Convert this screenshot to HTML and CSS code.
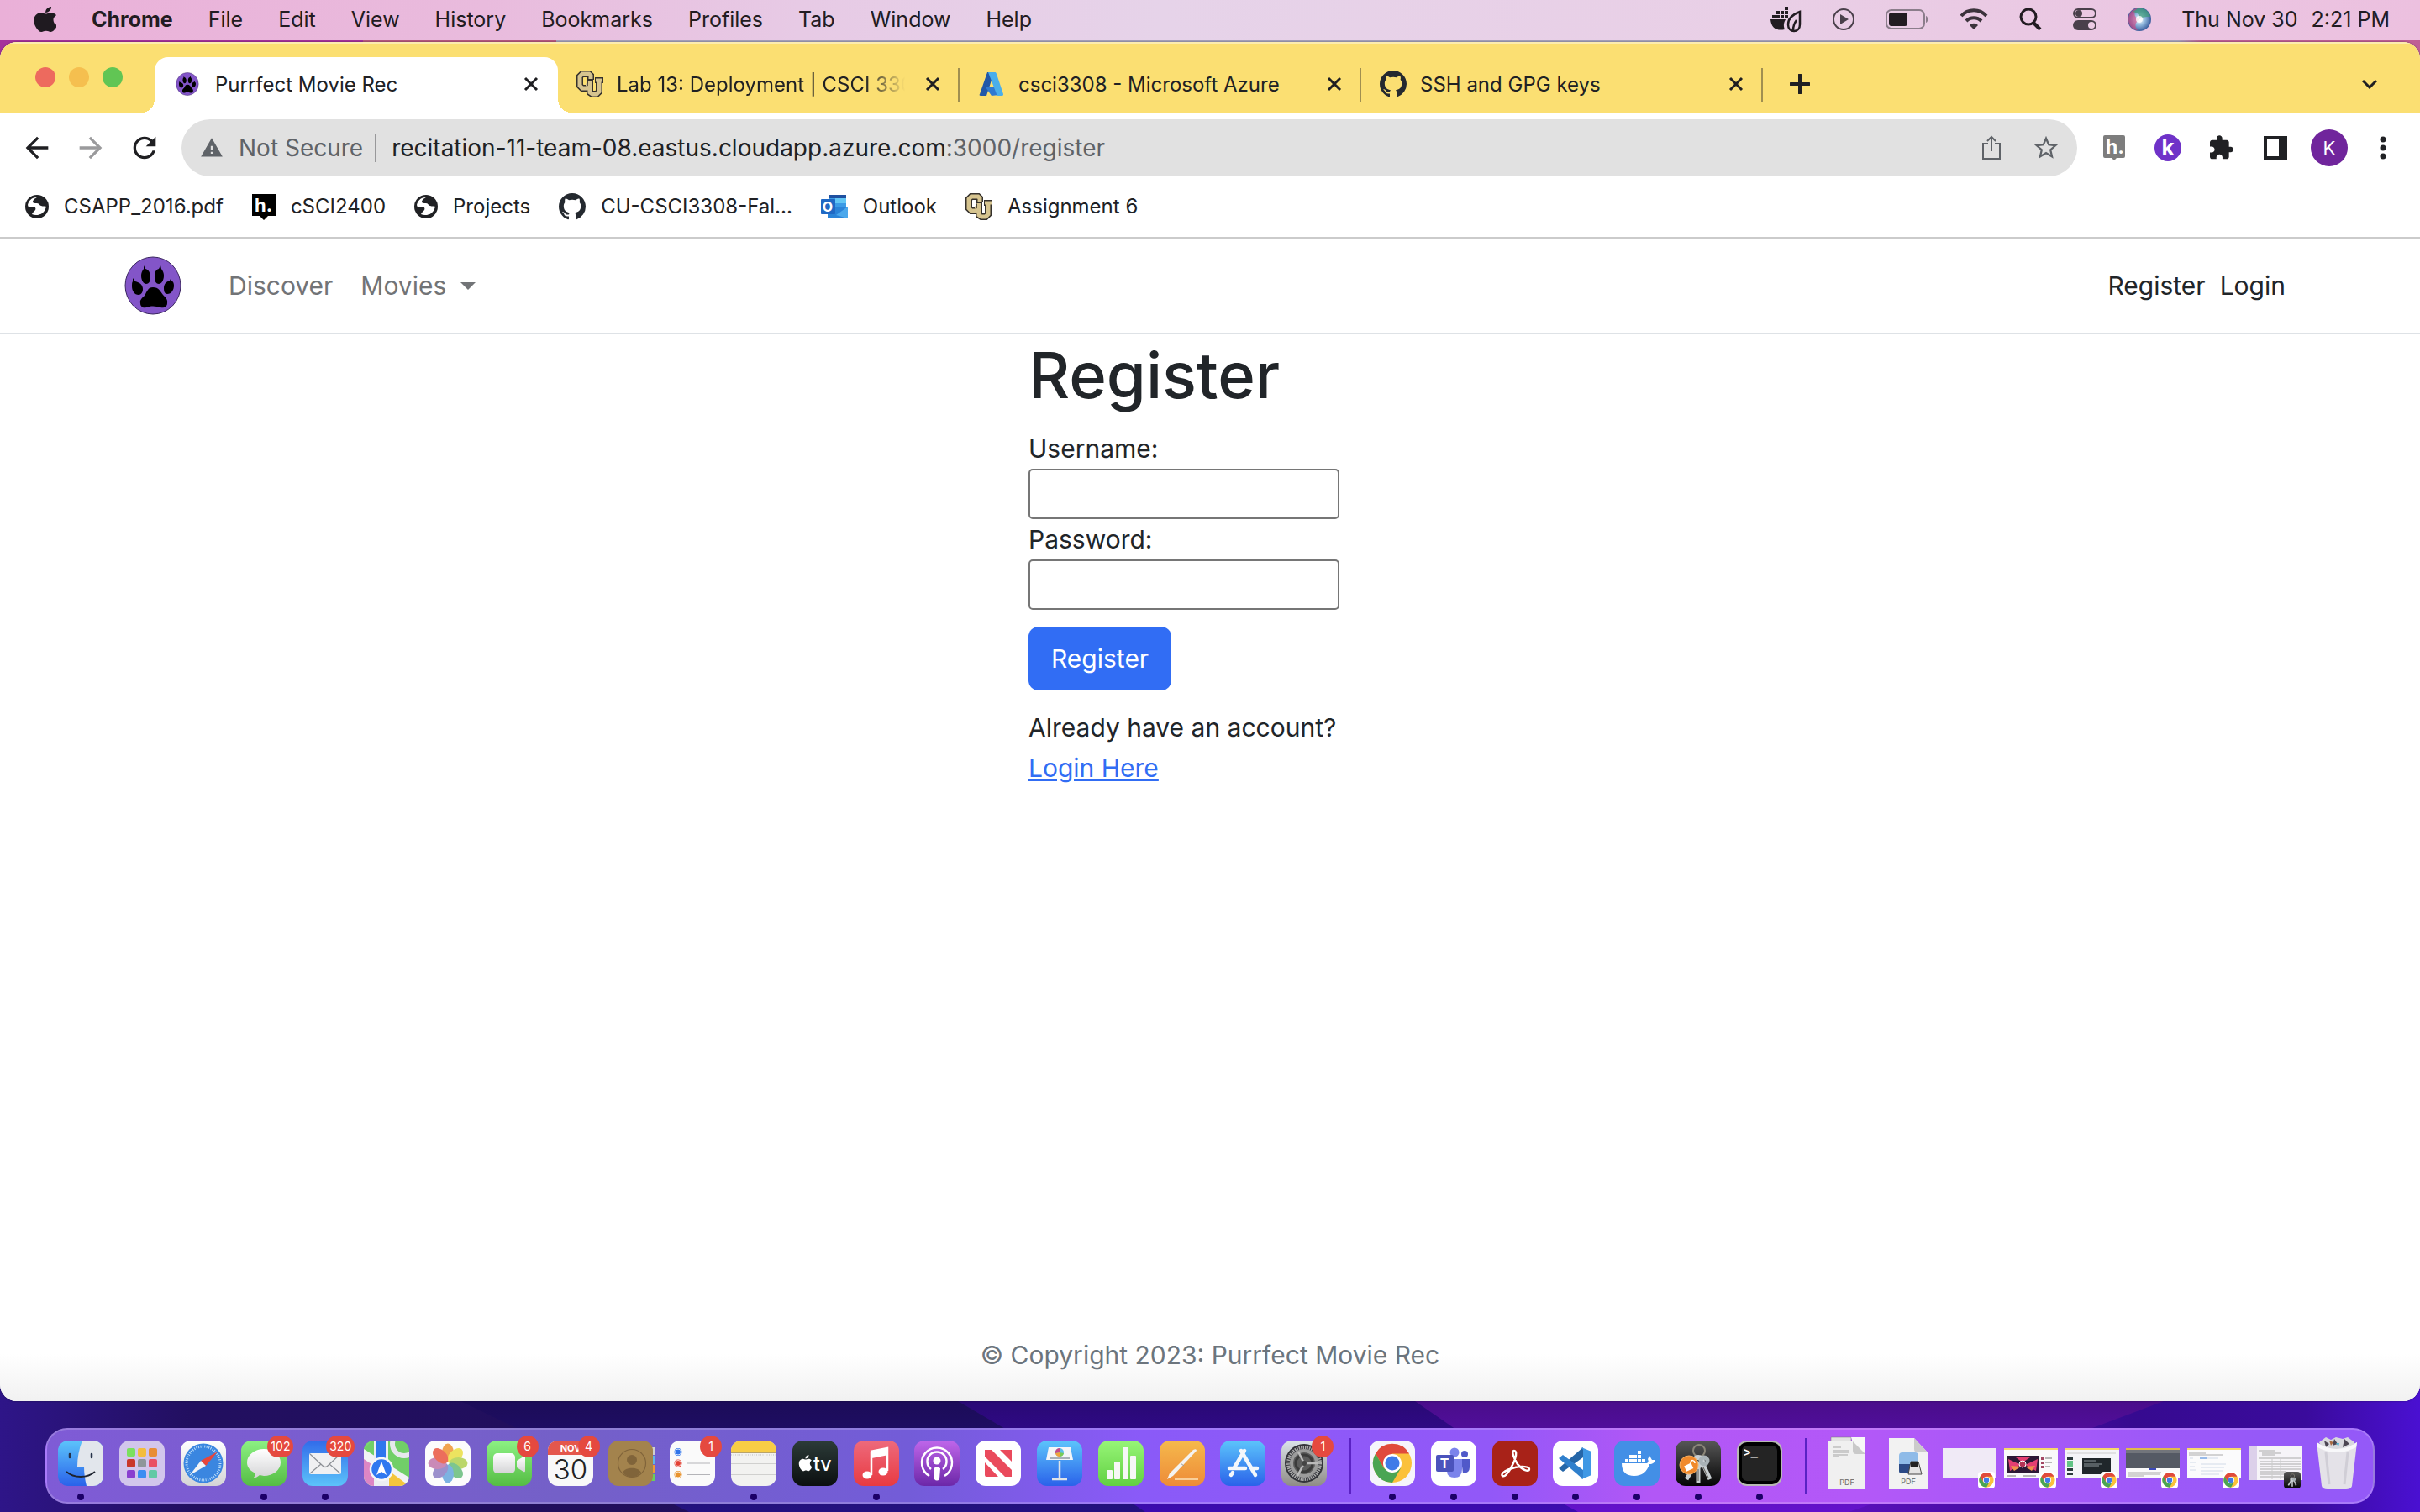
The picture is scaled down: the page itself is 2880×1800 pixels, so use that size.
FILE: index.html
```html
<!DOCTYPE html>
<html lang="en">
<head>
<meta charset="utf-8">
<title>Purrfect Movie Rec</title>
<link rel="stylesheet" href="styles.css">
</head>
<body>
<svg class="defs" width="0" height="0" aria-hidden="true">
  <defs>
    <linearGradient id="blue" x1="0" y1="0" x2="0" y2="1"><stop offset="0" stop-color="#5cc4fb"/><stop offset="1" stop-color="#2a62ea"/></linearGradient>
    <linearGradient id="blueUp" x1="0" y1="0" x2="0" y2="1"><stop offset="0" stop-color="#316bea"/><stop offset="1" stop-color="#5cc3fa"/></linearGradient>
    <linearGradient id="green" x1="0" y1="0" x2="0" y2="1"><stop offset="0" stop-color="#8cf183"/><stop offset="1" stop-color="#55bd44"/></linearGradient>
    <linearGradient id="lime" x1="0" y1="0" x2="0" y2="1"><stop offset="0" stop-color="#97f577"/><stop offset="1" stop-color="#62d043"/></linearGradient>
    <linearGradient id="grey" x1="0" y1="0" x2="0" y2="1"><stop offset="0" stop-color="#ffffff"/><stop offset="1" stop-color="#d4d4d6"/></linearGradient>
    <linearGradient id="red" x1="0" y1="0" x2="0" y2="1"><stop offset="0" stop-color="#ee6a7c"/><stop offset="1" stop-color="#e83a41"/></linearGradient>
    <linearGradient id="violet" x1="0" y1="0" x2="0" y2="1"><stop offset="0" stop-color="#bf66ea"/><stop offset="1" stop-color="#6c27a8"/></linearGradient>
    <linearGradient id="orange" x1="0" y1="0" x2="0" y2="1"><stop offset="0" stop-color="#f5b94c"/><stop offset="1" stop-color="#ee8b38"/></linearGradient>
    <linearGradient id="dark" x1="0" y1="0" x2="0" y2="1"><stop offset="0" stop-color="#2c3b38"/><stop offset="1" stop-color="#0b0f10"/></linearGradient>
    <linearGradient id="black" x1="0" y1="0" x2="0" y2="1"><stop offset="0" stop-color="#575757"/><stop offset="1" stop-color="#050505"/></linearGradient>
    <linearGradient id="steel" x1="0" y1="0" x2="0" y2="1"><stop offset="0" stop-color="#dbe3ea"/><stop offset="1" stop-color="#8f8c86"/></linearGradient>
    <clipPath id="tile"><rect width="54" height="54" rx="12"/></clipPath>

    <symbol id="i-paw" viewBox="0 0 68 70">
      <ellipse cx="34" cy="35" rx="33" ry="34" fill="#8355c8" stroke="#3a2560"/>
      <path d="M23 11l2 4c4 1 6 5 6 10 0 5-2 8-5 8s-6-4-6-10c0-3 1-5 3-8zM43 11l-2 4c-4 1-5 5-5 10 0 5 2 8 5 8s6-4 6-10c0-3-1-5-3-8zM10 26l3 4c5 1 9 4 9 9 0 4-2 7-5 7-5 0-8-5-8-10 0-3 0-5 1-6zM56 25l-2 4c-4 1-7 4-7 9 0 4 1 7 4 7 5 0 8-5 8-10 0-3-1-5-3-6zM34 37c7 0 9 5 12 9 3 3 6 6 5 10 0 4-4 6-8 5-6-2-12-2-17 0-4 1-7-1-7-5-1-4 2-6 5-9 3-5 4-10 10-10z"/>
    </symbol>
    <symbol id="i-close" viewBox="0 0 18 18"><path d="M2 2l14 14M16 2L2 16" stroke="#1f1f22" stroke-width="3" fill="none"/></symbol>
    <symbol id="i-github" viewBox="0 0 16 16"><path fill="#24292f" d="M8 0C3.58 0 0 3.58 0 8c0 3.54 2.29 6.53 5.47 7.59.4.07.55-.17.55-.38 0-.19-.01-.82-.01-1.49-2.01.37-2.53-.49-2.69-.94-.09-.23-.48-.94-.82-1.13-.28-.15-.68-.52-.01-.53.63-.01 1.08.58 1.23.82.72 1.21 1.87.87 2.33.66.07-.52.28-.87.51-1.07-1.78-.2-3.64-.89-3.64-3.95 0-.87.31-1.59.82-2.15-.08-.2-.36-1.02.08-2.12 0 0 .67-.21 2.2.82.64-.18 1.32-.27 2-.27.68 0 1.36.09 2 .27 1.53-1.04 2.2-.82 2.2-.82.44 1.1.16 1.92.08 2.12.51.56.82 1.27.82 2.15 0 3.07-1.87 3.75-3.65 3.95.29.25.54.73.54 1.48 0 1.07-.01 1.93-.01 2.2 0 .21.15.46.55.38A8.013 8.013 0 0016 8c0-4.42-3.58-8-8-8z"/></symbol>
    <symbol id="i-cu" viewBox="0 0 32 32">
      <g fill="none" stroke="#35312c" stroke-width="8"><path d="M17 11V6l-2-2H7L4 7v11l3 3h7"/><path d="M16 10v16l3 2h5l3-3V10"/><path d="M22 11.500h10" stroke-width="7"/></g>
      <g fill="none" stroke="#d6c48f" stroke-width="5"><path d="M17 10V6l-2-2H7L4 7v11l3 3h7"/><path d="M16 12v14l3 2h5l3-3V11"/><path d="M23 11.500h8" stroke-width="4"/></g>
      <path d="M11 17h8" stroke="#d6c48f" stroke-width="3"/><path d="M13 13v5M19 10v14" stroke="#35312c" stroke-width="1.500"/>
    </symbol>
    <symbol id="i-globe" viewBox="0 0 28 28">
      <circle cx="14" cy="14" r="14" fill="#202124"/>
      <path d="M13 3C8 3 4 7 3 12l1 3c2-1 3-1 5-1 3 0 4 2 3 4-1 1-1 2-3 3l-1 2c4 2 9 1 12-1 3-2 4-5 5-8-2-1-4 0-6-1-2 0-2-3-5-3s-5 0-5-2 2-2 2-3 3-1 3-3z" fill="#fff"/>
    </symbol>
    <symbol id="i-chrome" viewBox="0 0 48 48">
      <circle cx="24" cy="24" r="23" fill="#fbc13b"/>
      <path d="M4 12.500A23 23 0 0 1 44 12.500H24L14 30z" fill="#e04a3c"/>
      <path d="M4 12.500A23 23 0 0 0 24 47L34 30 24 35 14 30z" fill="#4aa553"/>
      <circle cx="24" cy="24" r="11" fill="#fff"/><circle cx="24" cy="24" r="8.500" fill="#3f7be8"/>
    </symbol>
    <symbol id="i-keys" viewBox="0 0 54 54">
      <g stroke="#c9cfd2" fill="none"><circle cx="28" cy="12" r="7" stroke-width="2" stroke="#8b8678"/>
      <path d="M26 24l-13 22M27 26v24M31 24l10 22" stroke-width="5"/><circle cx="27" cy="25" r="5" stroke-width="6"/><circle cx="34" cy="24" r="4" stroke-width="5" stroke="#aab3b7"/>
      <path d="M27 34v14M33 32l6 12" stroke="#5f5a50" stroke-width="1"/></g>
    </symbol>
  </defs>
</svg>

<svg class="desktop" viewBox="0 0 2880 200" preserveAspectRatio="none" aria-hidden="true">
  <defs>
    <linearGradient id="da" x1="0" x2="1" y1="0" y2="0"><stop offset="0" stop-color="#2e1588"/><stop offset=".08" stop-color="#220f60"/><stop offset="1" stop-color="#1b0d4b"/></linearGradient>
    <linearGradient id="db" x1="0" x2="0" y1="0" y2="1"><stop offset=".35" stop-color="#1c0c59"/><stop offset="1" stop-color="#231280"/></linearGradient>
    <linearGradient id="dc" x1="0" x2="0" y1="0" y2="1"><stop offset=".35" stop-color="#2a0976"/><stop offset="1" stop-color="#3c0cb0"/></linearGradient>
    <linearGradient id="dd" x1="0" x2="0" y1="0" y2="1"><stop offset=".35" stop-color="#4a0d8b"/><stop offset="1" stop-color="#6412cc"/></linearGradient>
    <linearGradient id="de" x1="0" x2="1" y1="0" y2="0"><stop offset="0" stop-color="#5a10bb"/><stop offset=".5" stop-color="#360a90"/><stop offset=".8" stop-color="#3a0b9c"/><stop offset="1" stop-color="#4a10d2"/></linearGradient>
  </defs>
  <rect width="2880" height="200" fill="url(#da)"/>
  <path d="M420 0L548 68 800 190 820 200H2880V0z" fill="url(#db)"/>
  <path d="M1020 0L1140 68 1348 190 1363 200H2880V0z" fill="url(#dc)"/>
  <path d="M1580 0L1684 68 1860 190 1878 200H2880V0z" fill="url(#dd)"/>
  <path d="M2740 0L2575 68 2490 100 2200 200H2880V0z" fill="url(#de)"/>
</svg>

<header class="menubar">
  <nav class="menus" aria-label="Menu bar">
    <button aria-label="Apple menu"><svg width="27" height="30" viewBox="2 0 19 24" preserveAspectRatio="none"><path fill="#1f1a20" d="M12.152 6.896c-.948 0-2.415-1.078-3.96-1.04-2.04.027-3.91 1.183-4.961 3.014-2.117 3.675-.546 9.103 1.519 12.09 1.013 1.454 2.208 3.09 3.792 3.039 1.520-.065 2.090-.987 3.935-.987 1.831 0 2.350.987 3.960.948 1.637-.026 2.676-1.480 3.676-2.948 1.156-1.688 1.636-3.325 1.662-3.415-.039-.013-3.182-1.221-3.220-4.857-.026-3.040 2.480-4.494 2.597-4.559-1.429-2.090-3.623-2.324-4.390-2.376-2-.156-3.675 1.090-4.610 1.090zM15.530 3.830c.843-1.012 1.400-2.427 1.245-3.830-1.207.052-2.662.805-3.532 1.818-.780.896-1.454 2.338-1.273 3.714 1.338.104 2.715-.688 3.559-1.701"/></svg></button>
    <button class="app-name">Chrome</button><button>File</button><button>Edit</button><button>View</button><button>History</button><button>Bookmarks</button><button>Profiles</button><button>Tab</button><button>Window</button><button>Help</button>
  </nav>
  <div class="status">
    <svg width="38" height="32" viewBox="0 0 38 32"><g fill="#221c22"><path d="M1 16h18c-2 4-3 7-1 12-9 2-16-1-17-12zM3 11h4v4H3zM8 11h4v4H8zM13 11h4v4h-4zM8 6h4v4H8zM13 6h4v4h-4zM18 6h4v4h-4zM18 1h4v4h-4zM18 11h4v3l-3 1h-1z"/></g><path d="M36 7c-8 3-14 7-14 15 0 5 3 8 7 8s7-3 7-8zM28 29c0-5 1-8 4-12" fill="none" stroke="#221c22" stroke-width="2.500"/></svg>
    <svg width="28" height="28" viewBox="0 0 28 28"><circle cx="14" cy="14" r="12" fill="none" stroke="#4a404b" stroke-width="2"/><path d="M10 8l10 6-10 6z" fill="#4a404b"/></svg>
    <svg width="52" height="26" viewBox="0 0 52 26"><rect x="1" y="2" width="45" height="22" rx="6" fill="none" stroke="#8b7d8b" stroke-width="2"/><rect x="4" y="5" width="22" height="16" rx="3" fill="#221c22"/><path d="M48 9c3 1 3 7 0 8z" fill="#8b7d8b"/></svg>
    <svg width="34" height="26" viewBox="0 0 34 26"><g fill="none" stroke="#3c333c" stroke-width="4"><path d="M2 9c8-9 22-9 30 0"/><path d="M8 15c5-5 13-5 18 0"/></g><path d="M12 20c3-3 7-3 10 0l-5 5z" fill="#3c333c"/></svg>
    <svg width="28" height="28" viewBox="0 0 28 28"><circle cx="12" cy="11" r="9" fill="none" stroke="#221c22" stroke-width="3"/><path d="M18 18l8 8" stroke="#221c22" stroke-width="4"/></svg>
    <svg width="30" height="28" viewBox="0 0 30 28"><rect x="2" y="2" width="26" height="10" rx="5" fill="none" stroke="#4a404b" stroke-width="2"/><circle cx="8" cy="7" r="4" fill="#4a404b"/><rect x="1" y="15" width="28" height="12" rx="6" fill="#4a404b"/><circle cx="23" cy="21" r="4" fill="#eccbe4"/></svg>
    <svg width="28" height="28" viewBox="0 0 28 28"><defs><radialGradient id="siri"><stop offset="0" stop-color="#fff"/><stop offset=".5" stop-color="#8fb7dc"/><stop offset="1" stop-color="#3a5c9c"/></radialGradient></defs><circle cx="14" cy="14" r="14" fill="url(#siri)"/><path d="M2 8C-2 20 6 27 12 27 6 20 12 16 14 14 8 12 6 6 12 1 7 1 4 4 2 8z" fill="#d8417f" opacity=".6"/><path d="M12 1c8-1 14 4 15 10-6 0-9 0-13 3 0-6-2-8-8-9z" fill="#3e9c78" opacity=".7"/><circle cx="14" cy="14" r="4" fill="#fff" opacity=".8"/></svg>
    <time class="clock"><span>Thu Nov 30</span><span>2:21 PM</span></time>
  </div>
</header>

<div class="window">
  <div class="tabstrip">
    <div class="lights"><button class="red" aria-label="Close window"></button><button class="amber" aria-label="Minimise"></button><button class="green" aria-label="Zoom"></button></div>
    <div class="tab active"><svg class="fav"><use href="#i-paw"/></svg><span class="title">Purrfect Movie Rec</span><button class="x" aria-label="Close tab"><svg><use href="#i-close"/></svg></button></div>
    <div class="tab"><svg class="fav"><use href="#i-cu"/></svg><span class="title fade">Lab 13: Deployment | CSCI 3308</span><button class="x" aria-label="Close tab"><svg><use href="#i-close"/></svg></button></div>
    <div class="tab"><svg class="fav" viewBox="0 0 32 32"><path d="M11 2h8L10 30H3c-1 0-2-1-1-2z" fill="#2158a8"/><path d="M9 20h12l4 9-9 1z" fill="#2f79d0"/><path d="M12 2h8c1 0 1 0 2 2l8 24c0 1 0 2-2 2h-7c1 0 2-1 1-2z" fill="#4aaeea"/></svg><span class="title">csci3308 - Microsoft Azure</span><button class="x" aria-label="Close tab"><svg><use href="#i-close"/></svg></button></div>
    <div class="tab"><svg class="fav"><use href="#i-github"/></svg><span class="title">SSH and GPG keys</span><button class="x" aria-label="Close tab"><svg><use href="#i-close"/></svg></button></div>
    <button class="new-tab" aria-label="New tab"><svg width="24" height="24" viewBox="0 0 24 24"><path d="M12 1v22M1 12h22" stroke="#1f1f22" stroke-width="4" stroke-linecap="round"/></svg></button>
    <button class="tab-search" aria-label="Search tabs"><svg width="20" height="12" viewBox="0 0 20 12"><path d="M2 2l8 8 8-8" fill="none" stroke="#1f1f22" stroke-width="3"/></svg></button>
  </div>

  <div class="toolbar">
    <div class="nav-buttons">
      <button aria-label="Back"><svg width="40" height="40" viewBox="0 0 24 24"><path fill="#1f1f22" d="M20 11H7.830l5.590-5.590L12 4l-8 8 8 8 1.410-1.410L7.830 13H20v-2z"/></svg></button>
      <button aria-label="Forward"><svg width="40" height="40" viewBox="0 0 24 24"><path fill="#9a9a9c" d="M4 13h12.170l-5.590 5.590L12 20l8-8-8-8-1.410 1.410L16.170 11H4v2z"/></svg></button>
      <button aria-label="Reload"><svg width="40" height="40" viewBox="0 0 24 24"><path fill="#1f1f22" d="M17.650 6.350C16.200 4.900 14.210 4 12 4c-4.420 0-7.990 3.580-7.990 8s3.570 8 7.990 8c3.730 0 6.840-2.550 7.730-6h-2.080c-.820 2.330-3.040 4-5.650 4-3.310 0-6-2.690-6-6s2.690-6 6-6c1.660 0 3.140.690 4.220 1.780L13 11h7V4l-2.350 2.350z"/></svg></button>
    </div>
    <div class="omnibox">
      <button class="site-info"><svg width="28" height="28" viewBox="0 0 24 24"><path fill="#5f6368" d="M1 21h22L12 2 1 21zm12-3h-2v-2h2v2zm0-4h-2v-4h2v4z"/></svg><span>Not Secure</span></button>
      <div class="url" role="textbox" aria-label="Address">recitation-11-team-08.eastus.cloudapp.azure.com<span>:3000/register</span></div>
      <button aria-label="Share"><svg width="24" height="32" viewBox="0 0 24 32"><path d="M8 11H2v18h20V11h-6M12 20V3M7 8l5-5 5 5" fill="none" stroke="#5f6368" stroke-width="2"/></svg></button>
      <button aria-label="Bookmark"><svg width="34" height="34" viewBox="0 0 24 24"><path fill="#5f6368" d="M22 9.240l-7.190-.620L12 2 9.190 8.630 2 9.240l5.460 4.730L5.820 21 12 17.270 18.180 21l-1.630-7.030L22 9.240zM12 15.400l-3.760 2.270 1-4.280-3.320-2.880 4.380-.380L12 6.100l1.710 4.040 4.380.380-3.320 2.880 1 4.280L12 15.400z"/></svg></button>
    </div>
    <div class="extensions">
      <button aria-label="Hypothesis"><svg width="32" height="32" viewBox="0 0 32 32"><path d="M5 1h22q2 0 2 2v23q0 2-2 2h-8l-3 3-3-3H5q-2 0-2-2V3q0-2 2-2z" fill="#7d7d7d"/><text x="6" y="23" class="glyph" font-size="23" fill="#fff">h.</text></svg></button>
      <button aria-label="Kami"><svg width="32" height="32" viewBox="0 0 32 32"><circle cx="16" cy="16" r="16" fill="#6f32c8"/><text x="16" y="25" class="glyph" text-anchor="middle" font-size="26" fill="#fff">k</text></svg></button>
      <button aria-label="Extensions"><svg width="32" height="32" viewBox="1 0 23 24"><path fill="#202124" d="M20.500 11H19V7c0-1.100-.9-2-2-2h-4V3.500C13 2.120 11.880 1 10.500 1S8 2.120 8 3.500V5H4c-1.100 0-1.990.9-1.990 2v3.800H3.500c1.490 0 2.700 1.210 2.700 2.700s-1.210 2.700-2.700 2.700H2V20c0 1.100.9 2 2 2h3.800v-1.500c0-1.490 1.210-2.700 2.700-2.700 1.490 0 2.700 1.210 2.700 2.700V22H17c1.100 0 2-.9 2-2v-4h1.500c1.380 0 2.500-1.120 2.500-2.500S21.880 11 20.500 11z"/></svg></button>
      <button aria-label="Side panel"><svg width="32" height="32" viewBox="0 0 32 32"><path fill-rule="evenodd" d="M2 2h28v28H2zM6 6v20h14V6z" fill="#202124"/></svg></button>
      <button class="avatar" aria-label="Profile">K</button>
      <button class="kebab" aria-label="Menu"><svg width="8" height="28" viewBox="0 0 8 28"><g fill="#202124"><circle cx="4" cy="4" r="3.500"/><circle cx="4" cy="14" r="3.500"/><circle cx="4" cy="24" r="3.500"/></g></svg></button>
    </div>
  </div>

  <nav class="bookmarks" aria-label="Bookmarks">
    <a href="#"><svg width="28" height="28"><use href="#i-globe"/></svg>CSAPP_2016.pdf</a>
    <a href="#"><svg width="28" height="32" viewBox="0 0 28 32"><path d="M0 1h28v26h-9l-5 5-5-5H0z"/><text x="3" y="22" class="glyph" font-size="22" fill="#fff">h.</text></svg>cSCI2400</a>
    <a href="#"><svg width="28" height="28"><use href="#i-globe"/></svg>Projects</a>
    <a href="#"><svg width="32" height="32"><use href="#i-github"/></svg>CU-CSCI3308-Fal...</a>
    <a href="#"><svg width="32" height="32" viewBox="0 0 32 32"><path d="M10 2h20v16H10z" fill="#3b9be6"/><path d="M10 2h20v4H10z" fill="#1f50a0"/><path d="M17 6h13v6H17z" fill="#62c6f4"/><path d="M8 16l24 0v14H8z" fill="#2a83d8"/><path d="M32 16L18 26l14 4z" fill="#4ba8ec"/><rect y="7" width="17" height="18" rx="1" fill="#1f68c4"/><text x="8" y="22" class="glyph" text-anchor="middle" font-size="16" fill="#fff">O</text></svg>Outlook</a>
    <a href="#"><svg width="32" height="32"><use href="#i-cu"/></svg>Assignment 6</a>
  </nav>

  <div class="site">
    <nav class="site-nav" aria-label="Site">
      <a class="brand" href="#" aria-label="Home"><svg width="68" height="70"><use href="#i-paw"/></svg></a>
      <div class="links"><a href="#">Discover</a><a href="#" class="dropdown">Movies<i class="caret"></i></a></div>
      <div class="account"><a href="#">Register</a><a href="#">Login</a></div>
    </nav>
    <main>
      <form class="register" onsubmit="return false">
        <h1>Register</h1>
        <label for="username">Username:</label>
        <input id="username" type="text">
        <label for="password">Password:</label>
        <input id="password" type="password">
        <button class="primary" type="submit">Register</button>
        <p>Already have an account?</p>
        <a href="#">Login Here</a>
      </form>
    </main>
    <footer>© Copyright 2023: Purrfect Movie Rec</footer>
  </div>
</div>

<nav class="dock" aria-label="Dock">
  <button class="app running" aria-label="Finder"><svg viewBox="0 0 54 54"><g clip-path="url(#tile)"><rect width="54" height="54" fill="url(#blue)"/><path d="M29 0c-4 10-6 20-6 31h8c0 8 1 15 3 23h20V0z" fill="#e2e6ec"/></g><path d="M14 16v4M40 16v4" stroke="#26334a" stroke-width="2.500" stroke-linecap="round"/><path d="M10 37c9 8 25 8 34 0" fill="none" stroke="#1e2430" stroke-width="1.800"/></svg></button>
  <button class="app" aria-label="Launchpad"><svg viewBox="0 0 54 54"><rect width="54" height="54" rx="12" fill="#d2c6ec"/><rect x="9" y="9" width="10" height="10" rx="2" fill="#7be05f"/><rect x="22" y="9" width="10" height="10" rx="2" fill="#f3bd3f"/><rect x="35" y="9" width="10" height="10" rx="2" fill="#e88d36"/><rect x="9" y="22" width="10" height="10" rx="2" fill="#c9372b"/><rect x="22" y="22" width="10" height="10" rx="2" fill="#8f969a"/><rect x="35" y="22" width="10" height="10" rx="2" fill="#e94f64"/><rect x="9" y="35" width="10" height="10" rx="2" fill="#8a3fd0"/><rect x="22" y="35" width="10" height="10" rx="2" fill="#3b8df2"/><rect x="35" y="35" width="10" height="10" rx="2" fill="#62c9a6"/></svg></button>
  <button class="app" aria-label="Safari"><svg viewBox="0 0 54 54"><rect width="54" height="54" rx="12" fill="url(#grey)"/><circle cx="27" cy="27" r="23.500" fill="#3a86e0"/><circle cx="27" cy="27" r="20" fill="none" stroke="#bfe0fa" stroke-width="3" stroke-dasharray="1 1.500"/><path d="M44 13L30 30l-6-6z" fill="#e8453a"/><path d="M11 41l13-17 6 6z" fill="#f2f4f6"/></svg></button>
  <button class="app running" aria-label="Messages"><svg viewBox="0 0 54 54"><rect width="54" height="54" rx="12" fill="url(#green)"/><path d="M27 10c11 0 20 7 20 16s-9 16-20 16l-5-1c-2 2-5 3-8 4 2-2 3-4 3-6-6-3-10-7-10-13 0-9 9-16 20-16z" fill="url(#grey)"/></svg><span class="badge">102</span></button>
  <button class="app running" aria-label="Mail"><svg viewBox="0 0 54 54"><rect width="54" height="54" rx="12" fill="url(#blueUp)"/><rect x="8" y="15" width="38" height="25" rx="2" fill="#f0f0f2"/><path d="M9 16l15 14q3 3 6 0l15-14M9 39l13-11M45 39L32 28" fill="none" stroke="#8d9096" stroke-width="1.200"/></svg><span class="badge">320</span></button>
  <button class="app" aria-label="Maps"><svg viewBox="0 0 54 54"><g clip-path="url(#tile)"><rect width="54" height="54" fill="#71cf68"/><path d="M0 0h10L0 10z" fill="#7bd86f"/><path d="M0 10l54 34v10H0z" fill="#f2f3f5"/><path d="M0 22l12 8v24H0z" fill="#dd86c4"/><path d="M30 36l24 18H30z" fill="#f4c53c"/><path d="M12 0h17v54H12z" fill="#eceef2"/><path d="M15 0h11v26H15z" fill="#2e76ee"/><circle cx="48" cy="4" r="14" fill="none" stroke="#e6e8ec" stroke-width="6"/></g><circle cx="21" cy="34" r="13" fill="#2f78f0" stroke="#f5f6f8" stroke-width="2.500"/><path d="M21 25l6 16-6-4-6 4z" fill="#fff"/></svg></button>
  <button class="app" aria-label="Photos"><svg viewBox="0 0 54 54"><rect width="54" height="54" rx="12" fill="#fcfcfc"/><g opacity=".88"><ellipse cx="27" cy="14.500" rx="7" ry="11" fill="#f0983a"/><ellipse cx="27" cy="14.500" rx="7" ry="11" fill="#ece04a" transform="rotate(45 27 27)"/><ellipse cx="27" cy="14.500" rx="7" ry="11" fill="#b3d356" transform="rotate(90 27 27)"/><ellipse cx="27" cy="14.500" rx="7" ry="11" fill="#6cbf7f" transform="rotate(135 27 27)"/><ellipse cx="27" cy="14.500" rx="7" ry="11" fill="#6ba9de" transform="rotate(180 27 27)"/><ellipse cx="27" cy="14.500" rx="7" ry="11" fill="#8f83c6" transform="rotate(225 27 27)"/><ellipse cx="27" cy="14.500" rx="7" ry="11" fill="#c47bae" transform="rotate(270 27 27)"/><ellipse cx="27" cy="14.500" rx="7" ry="11" fill="#ea5b47" transform="rotate(315 27 27)"/></g></svg></button>
  <button class="app" aria-label="FaceTime"><svg viewBox="0 0 54 54"><rect width="54" height="54" rx="12" fill="url(#green)"/><rect x="8" y="15" width="26" height="24" rx="5" fill="url(#grey)"/><path d="M36 24l8-5q2-1 2 1v16q0 2-2 1l-8-5z" fill="url(#grey)"/></svg><span class="badge">6</span></button>
  <button class="app" aria-label="Calendar"><svg viewBox="0 0 54 54"><g clip-path="url(#tile)"><rect width="54" height="54" fill="#f8f8f8"/><rect width="54" height="17" fill="#e4574c"/></g><text x="27" y="13" text-anchor="middle" class="glyph" font-size="11" fill="#fff">NOV</text><text x="27" y="46" text-anchor="middle" class="thin" font-size="33" fill="#222">30</text></svg><span class="badge">4</span></button>
  <button class="app" aria-label="Contacts"><svg viewBox="0 0 54 54"><path d="M50 8h5v9h-5z" fill="#cfd0ce"/><path d="M50 18h6v10h-6z" fill="#5fb6e8"/><path d="M50 29h6v10h-6z" fill="#ee9a36"/><path d="M50 40h5v8h-5z" fill="#68cf5e"/><rect width="53" height="54" rx="12" fill="#a3834d"/><circle cx="28" cy="27" r="16.500" fill="none" stroke="#80643a" stroke-width="1.200"/><circle cx="28" cy="23" r="6" fill="#80643a"/><path d="M17 38c3-7 19-7 22 0-6 7-16 7-22 0z" fill="#80643a"/></svg></button>
  <button class="app" aria-label="Reminders"><svg viewBox="0 0 54 54"><rect width="54" height="54" rx="12" fill="#fafafa"/><path d="M20 13.500h28M20 27h28M20 40.500h28" stroke="#b4b4b8" stroke-width="1.200"/><circle cx="10" cy="13.500" r="4.500" fill="#2f74ea"/><circle cx="10" cy="27" r="4.500" fill="#e34234"/><circle cx="10" cy="40.500" r="4.500" fill="#e8932e"/><g fill="none" stroke="#fff" stroke-width=".8"><circle cx="10" cy="13.500" r="3.500"/><circle cx="10" cy="27" r="3.500"/><circle cx="10" cy="40.500" r="3.500"/></g></svg><span class="badge">1</span></button>
  <button class="app running" aria-label="Notes"><svg viewBox="0 0 54 54"><g clip-path="url(#tile)"><rect width="54" height="54" fill="#f2f2f0"/><rect width="54" height="14" fill="#f8cd45"/></g><path d="M0 14.500h54" stroke="#b8a36a"/><path d="M0 17h54" stroke="#bbb" stroke-dasharray="1 1.500"/><path d="M0 27.500h54M0 40.500h54" stroke="#d0d0ce"/></svg></button>
  <button class="app" aria-label="TV"><svg viewBox="0 0 54 54"><rect width="54" height="54" rx="12" fill="url(#dark)"/><path transform="translate(6 17) scale(.8)" fill="#fff" d="M12.152 6.896c-.948 0-2.415-1.078-3.960-1.040-2.040.027-3.910 1.183-4.961 3.014-2.117 3.675-.546 9.103 1.519 12.090 1.013 1.454 2.208 3.090 3.792 3.039 1.520-.065 2.090-.987 3.935-.987 1.831 0 2.350.987 3.960.948 1.637-.026 2.676-1.480 3.676-2.948 1.156-1.688 1.636-3.325 1.662-3.415-.039-.013-3.182-1.221-3.220-4.857-.026-3.040 2.480-4.494 2.597-4.559-1.429-2.090-3.623-2.324-4.390-2.376-2-.156-3.675 1.090-4.610 1.090zM15.530 3.830c.843-1.012 1.400-2.427 1.245-3.830-1.207.052-2.662.805-3.532 1.818-.780.896-1.454 2.338-1.273 3.714 1.338.104 2.715-.688 3.559-1.701"/><text x="25" y="36" class="label" font-size="23" fill="#fff">tv</text></svg></button>
  <button class="app running" aria-label="Music"><svg viewBox="0 0 54 54"><rect width="54" height="54" rx="12" fill="url(#red)"/><path d="M20 13l20-4v27M20 20l20-4M21 13v28" stroke="#fff" stroke-width="2.500" fill="none"/><path d="M20 13l20-4v7l-20 4z" fill="#fff"/><ellipse cx="16" cy="41" rx="5.500" ry="4.500" fill="#fff"/><ellipse cx="35" cy="37" rx="5.500" ry="4.500" fill="#fff"/></svg></button>
  <button class="app" aria-label="Podcasts"><svg viewBox="0 0 54 54"><rect width="54" height="54" rx="12" fill="url(#violet)"/><g fill="none" stroke="#fff" stroke-width="2.500"><path d="M18 42a18 18 0 1 1 18 0"/><path d="M20 34a11.500 11.500 0 1 1 14 0"/></g><circle cx="27" cy="24" r="4.500" fill="#fff"/><path d="M23 33q4-3 8 0l-1 13q-3 3-6 0z" fill="#fff"/></svg></button>
  <button class="app" aria-label="News"><svg viewBox="0 0 54 54"><rect width="54" height="54" rx="12" fill="#fff"/><path d="M11 11h8l24 24v8h-8L11 19zM29 11h14v14zM11 26l16 17H13q-2 0-2-2z" fill="#ea4a5c"/></svg></button>
  <button class="app" aria-label="Keynote"><svg viewBox="0 0 54 54"><rect width="54" height="54" rx="12" fill="url(#blue)"/><path d="M14 8h26l3 15H11z" fill="#f4f5f7"/><path d="M15 21h24" stroke="#a9b0b8" stroke-width="2"/><path d="M27 24v21M18 46h18" stroke="#dfe3e8" stroke-width="2.500"/><circle cx="27" cy="14" r="5" fill="#5dbde8"/><path d="M27 14V9a5 5 0 0 0-5 6z" fill="#c44a8a"/><path d="M27 14l-5 1a5 5 0 0 0 5 4z" fill="#f0a33c"/><path d="M27 14v5a5 5 0 0 0 5-4z" fill="#7acb54"/></svg></button>
  <button class="app" aria-label="Numbers"><svg viewBox="0 0 54 54"><rect width="54" height="54" rx="12" fill="url(#lime)"/><g fill="#f6f7f6"><rect x="10" y="35" width="7" height="11" rx="1"/><rect x="19" y="25" width="7" height="21" rx="1"/><rect x="29" y="8" width="7" height="38" rx="1"/><rect x="38" y="18" width="7" height="28" rx="1"/></g></svg></button>
  <button class="app" aria-label="Pages"><svg viewBox="0 0 54 54"><rect width="54" height="54" rx="12" fill="url(#orange)"/><path d="M9 46l3-7L40 11q4-2 4 1L16 42z" fill="#f4f3f0"/><path d="M25 27l4 3" stroke="#999" stroke-width="1"/><path d="M18 46h28" stroke="#f9cf9a" stroke-width="2"/></svg></button>
  <button class="app" aria-label="App Store"><svg viewBox="0 0 54 54"><rect width="54" height="54" rx="12" fill="url(#blue)"/><g stroke="#f4f7fb" stroke-width="4.500" stroke-linecap="round"><path d="M29 12L17 32M25 12l17 29M11 33h19M39 33h5M15 38l-2 3"/></g></svg></button>
  <button class="app" aria-label="System Preferences"><svg viewBox="0 0 54 54"><rect width="54" height="54" rx="12" fill="url(#steel)"/><circle cx="27" cy="27" r="23" fill="#33343a"/><circle cx="27" cy="27" r="19" fill="none" stroke="#aaa" stroke-width="4" stroke-dasharray="1.500 1"/><circle cx="27" cy="27" r="15" fill="#5c5c5c" stroke="#9b9b9b" stroke-width="4"/><circle cx="27" cy="27" r="10" fill="none" stroke="#3b3b3b" stroke-width="3"/><path d="M27 27L20 13M27 27h17M27 27l-8 15" stroke="#bbb" stroke-width="2.500"/><circle cx="27" cy="27" r="3" fill="#444"/></svg><span class="badge">1</span></button>
  <span class="sep"></span>
  <button class="app running" aria-label="Chrome"><svg viewBox="0 0 54 54"><rect width="54" height="54" rx="12" fill="#f6f4fb"/><use href="#i-chrome" x="3" y="3" width="48" height="48"/></svg></button>
  <button class="app running" aria-label="Teams"><svg viewBox="0 0 54 54"><rect width="54" height="54" rx="12" fill="#fff"/><circle cx="28" cy="14" r="5.500" fill="#7b83eb"/><circle cx="40" cy="16" r="4" fill="#5059c9"/><path d="M36 22h10v10q0 7-8 7z" fill="#5059c9"/><path d="M19 22h18v12q0 10-9 10t-9-8z" fill="#7b83eb"/><rect x="6" y="17" width="21" height="20" rx="2" fill="#4b53bc"/><text x="16" y="33" text-anchor="middle" class="glyph" font-size="16" fill="#fff">T</text></svg></button>
  <button class="app running" aria-label="Acrobat"><svg viewBox="0 0 54 54"><rect width="54" height="54" rx="12" fill="#a82218"/><path d="M26 12c4 0 2 10-2 17-4 8-9 15-12 13-3-3 6-8 15-10 8-2 17-1 17 2 0 4-9 1-14-6-4-6-8-16-4-16z" fill="none" stroke="#fff" stroke-width="2.500"/></svg></button>
  <button class="app running" aria-label="Visual Studio Code"><svg viewBox="0 0 54 54"><rect width="54" height="54" rx="12" fill="#fff"/><path d="M36 8v12L12 37l-5-4z" fill="#2566a8"/><path d="M7 21l5-4 24 18v11z" fill="#2f7fcc"/><path d="M34 8l12 5v28l-12 5 2-3V11z" fill="#3f98e4"/></svg></button>
  <button class="app running" aria-label="Docker"><svg viewBox="0 0 54 54"><rect width="54" height="54" rx="12" fill="#438fe6"/><path d="M9 27h30c2-1 2-3 1-5l2-4 3 5h4c-1 3-3 5-7 5-3 9-9 14-18 14C14 42 9 37 9 27z" fill="#fff"/><path d="M13 22h4v4h-4zM18 22h4v4h-4zM23 22h4v4h-4zM28 22h4v4h-4zM33 22h4v4h-4zM18 17h4v4h-4zM23 17h4v4h-4zM28 17h4v4h-4zM28 12h4v4h-4z" fill="#fff"/></svg></button>
  <button class="app running" aria-label="Keychain Access"><svg viewBox="0 0 54 54"><rect width="54" height="54" rx="12" fill="url(#black)"/><use href="#i-keys" width="54" height="54"/><circle cx="16" cy="29" r="11" fill="#f08a2c" stroke="#f7b064"/><path d="M11 28h9v7h-9z" fill="#fff" transform="rotate(-25 16 31)"/><path d="M18 27c0-5 5-4 5 0" stroke="#fff" stroke-width="1.500" fill="none"/></svg></button>
  <button class="app running" aria-label="Terminal"><svg viewBox="0 0 54 54"><rect width="54" height="54" rx="12" fill="#b9b9b4"/><rect x="2" y="2" width="50" height="50" rx="10" fill="#000"/><rect x="6" y="6" width="42" height="42" rx="6" fill="#242424"/><text x="8" y="19" class="mono" font-size="14" fill="#fff">&gt;_</text></svg></button>
  <span class="sep"></span>
  <button class="app" aria-label="Documents"><svg viewBox="0 0 54 54"><path d="M8-4h24v8H8z" fill="#e2e2e2" stroke="#777" stroke-width=".5"/><path d="M5 1h29l15 15v42H5z" fill="#f0f0f0"/><path d="M32-4h16v20H38z" fill="#f7f7f7"/><path d="M34 1l15 15H38q-4 0-4-4z" fill="#c9c9c9"/><path d="M10 8h10M10 12h20M10 14h19M10 17h18M10 19h8" stroke="#a5a5a5"/><text x="27" y="53" text-anchor="middle" font-size="9" class="label" fill="#777">PDF</text></svg></button>
  <button class="app" aria-label="Preview document"><svg viewBox="0 0 54 54"><path d="M4-3h30l16 17v44H4z" fill="#f2f2f2"/><path d="M34-3l16 17H38q-4 0-4-4z" fill="#cbcbcb"/><rect x="16" y="14" width="23" height="25" rx="4" fill="#8fbbe8"/><path d="M16 28h23v8q0 3-3 3H19q-3 0-3-3z" fill="#2c4a86"/><path d="M30 25h9l4 15H27z" fill="#e4e4e4" stroke="#444"/><path d="M30 25h9v6h-9z" fill="#222"/><text x="27" y="52" text-anchor="middle" font-size="9" class="label" fill="#777">PDF</text></svg></button>
  <button class="thumb" aria-label="Minimised window"><svg viewBox="0 0 64 54"><path d="M0 9h64v36H0z" fill="#f0eaf6"/><rect x="42" y="37" width="20" height="20" rx="4" fill="#fff"/><use href="#i-chrome" x="43" y="38" width="18" height="18"/></svg></button>
  <button class="thumb" aria-label="Minimised window"><svg viewBox="0 0 64 54"><path d="M0 9h64v36H0z" fill="#fafafa"/><path d="M0 9h64v2H0z" fill="#f6d96b"/><path d="M3 18h39v21H3z" fill="#2d1936"/><path d="M5 22l15 7-13 7zM40 22l-15 7 13 7zM14 20l8 6 9-6z" fill="#e43f72"/><path d="M8 30l12 1-8 5zM37 30l-12 1 8 5z" fill="#f0924a"/><circle cx="22" cy="28" r="4" fill="#b33355" stroke="#fff"/><path d="M44 20h3v3h-3zM44 25h3v3h-3zM44 30h3v3h-3z" fill="#a34863"/><path d="M4 42h10M22 42h16M49 21h8M49 26h8M49 31h6" stroke="#777"/><rect x="42" y="37" width="20" height="20" rx="4" fill="#fff"/><use href="#i-chrome" x="43" y="38" width="18" height="18"/></svg></button>
  <button class="thumb" aria-label="Minimised window"><svg viewBox="0 0 64 54"><path d="M0 9h64v36H0z" fill="#f4f5f8"/><path d="M0 9h64v2H0z" fill="#f6d96b"/><path d="M2 15h58" stroke="#ccc"/><path d="M2 19h7v4H2zM2 33h7v3H2zM2 38h7v3H2z" fill="#2b3a3c"/><path d="M2 24h7v8H2z" fill="#62c487"/><path d="M20 21h34v19H20z" fill="#20272b"/><path d="M22 24h14M22 28h22M22 30h18" stroke="#8f9a9e"/><rect x="42" y="37" width="20" height="20" rx="4" fill="#fff"/><use href="#i-chrome" x="43" y="38" width="18" height="18"/></svg></button>
  <button class="thumb" aria-label="Minimised window"><svg viewBox="0 0 64 54"><path d="M0 9h64v36H0z" fill="#fafafa"/><path d="M0 9h64v2H0z" fill="#e0b94b"/><path d="M0 11h64v4H0z" fill="#72757b"/><path d="M0 15h64v18H0z" fill="#555a64"/><path d="M28 34h8" stroke="#3d4ab8" stroke-width="2"/><path d="M2 38h40M2 40h38M2 42h20" stroke="#aaa"/><rect x="42" y="37" width="20" height="20" rx="4" fill="#fff"/><use href="#i-chrome" x="43" y="38" width="18" height="18"/></svg></button>
  <button class="thumb" aria-label="Minimised window"><svg viewBox="0 0 64 54"><path d="M0 9h64v36H0z" fill="#fbfbfc"/><path d="M0 9h64v2H0z" fill="#f6d96b"/><path d="M2 15h20M2 17h40" stroke="#aaa"/><path d="M3 21h4M15 21h22M3 26h8M16 28h30M16 32h28M16 36h26M16 40h22M3 31h6M3 35h7" stroke="#d2dbe8"/><path d="M15 21h8" stroke="#4a8be0"/><rect x="42" y="37" width="20" height="20" rx="4" fill="#fff"/><use href="#i-chrome" x="43" y="38" width="18" height="18"/></svg></button>
  <button class="thumb" aria-label="Minimised window"><svg viewBox="0 0 64 54"><path d="M0 7h64v40H0z" fill="#f6f4f8"/><path d="M0 7h10v40H0z" fill="#dcd0ea"/><path d="M12 12h20M16 15h22M16 17h16M12 21h50M14 25h48M14 28h48M14 31h48M14 34h48M14 37h30M14 40h30M14 43h30" stroke="#aaa"/><path d="M28 22v24M38 22v24" stroke="#ccc"/><rect x="42" y="37" width="20" height="20" rx="4" fill="url(#black)"/><use href="#i-keys" x="43" y="38" width="18" height="18"/></svg></button>
  <button class="app" aria-label="Trash"><svg viewBox="0 0 54 54"><path d="M6 2l8-6 6 3 6-3 8 2 6-2 8 6-4 8H10z" fill="#d9d9de"/><path d="M12 0l6 4-4 4zM24-2l4 6-6 2zM36-2l6 6-8 4z" fill="#4c4653"/><path d="M18 0l5 2-3 4z" fill="#a86b43"/><path d="M26 3l4 0-1 4z" fill="#54b2d0"/><path d="M3 2q24 16 48 0L45 54q-1 4-7 4H16q-6 0-7-4z" fill="#e4e2e8"/><path d="M3 2q24 16 48 0l-1 6q-23 12-46 0z" fill="#f8f8fa"/><path d="M14 14l4 38M40 14l-4 38" stroke="#d0ced6" stroke-width="3"/></svg></button>
</nav>
</body>
</html>
```
FILE: styles.css
```css
* { box-sizing: border-box; }

body {
  margin: 0;
  min-height: 100vh;
  display: flex;
  flex-direction: column;
  position: relative;
  font-family: Inter, "Liberation Sans", sans-serif;
  font-size: 24px;
  color: #202124;
  background: linear-gradient(to right, #a5329b 0, #a5329b 15%, #b8597f 15%, #b8597f 23%, #a7a3bd 23%, #a7a3bd 90%, #bf5f95 91%);
}

button {
  margin: 0;
  padding: 0;
  border: 0;
  background: none;
  color: inherit;
  font: inherit;
}

a { color: inherit; text-decoration: none; }
svg { display: block; flex: none; }
.defs { position: absolute; }

.glyph { font-family: Inter, sans-serif; font-weight: 700; }
.label { font-family: Inter, sans-serif; font-weight: 500; }
.thin { font-family: Inter, sans-serif; font-weight: 300; }
.mono { font-family: "Liberation Mono", monospace; font-weight: 700; }

.desktop {
  position: absolute;
  left: 0;
  bottom: 0;
  width: 100%;
  height: 200px;
}

/* macOS menu bar */
.menubar {
  height: 48px;
  display: flex;
  justify-content: space-between;
  align-items: center;
  padding: 0 36px 2px 40px;
  font-size: 25px;
  color: #221c22;
  background: linear-gradient(to right, #eab0d8, #e9bbdd 20%, #e7cae5 33%, #e6d3e9 48%, #e9cfe6 73%, #ecc0df);
}
.menus { display: flex; align-items: center; gap: 42px; }
.app-name { font-weight: 700; }
.status { display: flex; align-items: center; gap: 36px; }
.clock { display: flex; gap: 16px; }

/* Browser window */
.window {
  flex: 1;
  display: flex;
  flex-direction: column;
  position: relative;
  margin-top: 2px;
  border-radius: 20px;
  overflow: hidden;
  background: #fff;
  box-shadow: 0 0 2px rgba(0, 0, 0, .5);
}

.tabstrip {
  height: 84px;
  padding-top: 16px;
  display: flex;
  background: #fbdf72;
  border-top: 2px solid #fcecae;
}
.lights {
  width: 184px;
  padding: 12px 0 0 42px;
  display: flex;
  gap: 16px;
}
.lights button { width: 24px; height: 24px; border-radius: 50%; }
.lights .red { background: #ed6a5e; }
.lights .amber { background: #f5bf4f; }
.lights .green { background: #61c554; }

.tab {
  width: 478px;
  height: 66px;
  display: flex;
  align-items: center;
  padding: 0 23px 2px 22px;
  position: relative;
}
.tab.active {
  width: 480px;
  padding-left: 24px;
  background: #fff;
  border-radius: 16px 16px 0 0;
}
.tab.active::before,
.tab.active::after {
  content: "";
  position: absolute;
  bottom: 0;
  width: 16px;
  height: 16px;
}
.tab.active::before { right: 100%; background: radial-gradient(circle at 0 0, #fbdf72 16px, #fff 16px); }
.tab.active::after { left: 100%; background: radial-gradient(circle at 100% 0, #fbdf72 16px, #fff 16px); }
.tab:not(.active)::after {
  content: "";
  position: absolute;
  right: 0;
  top: 13px;
  width: 2px;
  height: 40px;
  background: #a08f50;
}
.fav { width: 32px; height: 32px; margin-right: 16px; }
.tab.active .fav { width: 30px; height: 28px; margin-right: 18px; }
.title { flex: 1; min-width: 0; overflow: hidden; white-space: nowrap; }
.title.fade { -webkit-mask-image: linear-gradient(to right, #000 86%, transparent); mask-image: linear-gradient(to right, #000 86%, transparent); }
.x { padding-left: 24px; }
.x svg { width: 18px; height: 18px; }
.new-tab { padding: 0 32px 2px; }
.tab-search { margin-left: auto; padding: 0 50px 2px 0; }

.toolbar {
  display: flex;
  align-items: center;
  padding: 8px 40px 9px 24px;
}
.nav-buttons { display: flex; gap: 24px; width: 192px; }
.omnibox {
  flex: 1;
  height: 68px;
  border-radius: 34px;
  background: #e1e1e1;
  display: flex;
  align-items: center;
  gap: 36px;
  padding: 0 20px 0 22px;
  font-size: 28px;
}
.site-info {
  display: flex;
  align-items: center;
  gap: 18px;
  color: #5f6368;
  padding-right: 14px;
  border-right: 2px solid #98989a;
}
.url { flex: 1; margin-left: -18px; }
.url span { color: #5f6368; }
.extensions { display: flex; align-items: center; gap: 32px; padding-left: 28px; }
.avatar {
  width: 44px;
  height: 44px;
  margin: 0 -6px;
  border-radius: 50%;
  background: #70259c;
  color: #fff;
  font-size: 22px;
}
.kebab { padding-left: 12px; }

.bookmarks {
  height: 65px;
  display: flex;
  gap: 34px;
  padding: 0 30px 10px;
  border-bottom: 2px solid #cbcbcb;
}
.bookmarks a { display: flex; align-items: center; gap: 18px; }

/* Page */
.site {
  flex: 1;
  display: flex;
  flex-direction: column;
  font-size: 30px;
  line-height: 48px;
  color: #212529;
  background: linear-gradient(to top, #f1f1f1, #fff 56px);
}
.site-nav {
  height: 114px;
  display: flex;
  align-items: center;
  padding: 0 160px 0 148px;
  border-bottom: 2px solid #dee2e6;
}
.links { display: flex; gap: 33px; margin-left: 56px; color: #727477; }
.dropdown { display: flex; align-items: center; gap: 17px; }
.caret { border: 9px solid transparent; border-top-color: currentColor; border-bottom: 0; }
.account { display: flex; gap: 17px; margin-left: auto; }

main { flex: 1; display: flex; justify-content: center; }
.register {
  width: 432px;
  display: flex;
  flex-direction: column;
  align-items: flex-start;
}
h1 {
  margin: 0 0 16px;
  font-size: 76px;
  line-height: 96px;
  font-weight: 500;
}
.register label { line-height: 48px; }
.register input {
  width: 370px;
  height: 60px;
  padding: 2px 4px;
  border: 2px solid #767676;
  border-radius: 5px;
  font: inherit;
  background: #fff;
}
.primary {
  height: 76px;
  margin: 20px 0;
  padding: 0 27px;
  border-radius: 12px;
  background: #316df4;
  color: #fff;
}
.register p { margin: 0; }
.register a { color: #316df4; text-decoration: underline; }
footer { text-align: center; color: #6c757d; padding-bottom: 31px; }

/* Dock */
.dock {
  position: relative;
  display: flex;
  justify-content: space-between;
  height: 90px;
  margin: 32px 54px 10px;
  padding: 13px 16px 0 13px;
  border: 2px solid rgba(255, 255, 255, .2);
  border-radius: 26px;
  background: linear-gradient(to right, #7f5bd6, #7460c8 22%, #735cd8 37%, #8a5af8 47%, #9258f8 62%, #b257f6 69%, #b358f8 78%, #9659f8 95%, #9459f8);
}
.app, .thumb { width: 54px; height: 54px; position: relative; }
.app svg, .thumb svg { height: 54px; overflow: visible; }
.app svg { width: 54px; }
.thumb svg { width: 64px; margin: 0 -5px; }
.running::after {
  content: "";
  position: absolute;
  left: 23px;
  top: 63px;
  width: 8px;
  height: 8px;
  border-radius: 50%;
  background: #1c0068;
}
.badge {
  position: absolute;
  top: -6px;
  right: -8px;
  min-width: 26px;
  height: 26px;
  padding: 0 4px;
  border-radius: 13px;
  background: #e5493f;
  color: #fff;
  font-size: 14px;
  line-height: 26px;
  text-align: center;
}
.sep { width: 2px; height: 66px; margin: -3px 3px 0 8px; background: #5a22c4; }
```
